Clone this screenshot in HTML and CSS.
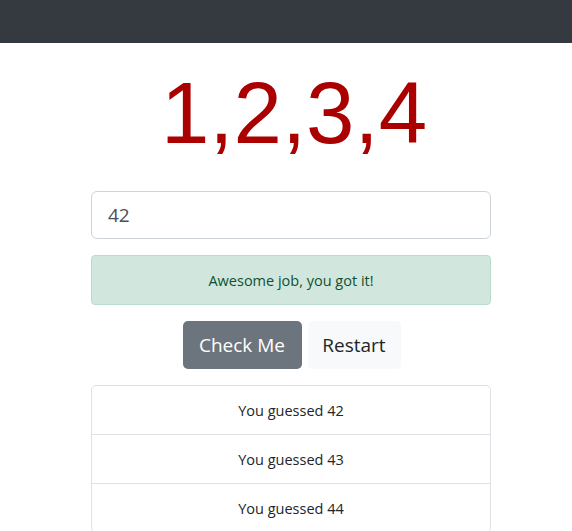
FILE: index.html
```html
<!DOCTYPE html>
<html>
<head>
<meta charset="utf-8">
<link rel="stylesheet" href="styles.css">
</head>
<body>
<nav class="navbar"></nav>
<main class="game">
  <h1 class="target">1,2,3,4</h1>
  <input class="guess" type="text" value="42">
  <div class="alert">Awesome job, you got it!</div>
  <div class="actions">
    <button class="btn btn-check">Check Me</button>
    <button class="btn btn-restart">Restart</button>
  </div>
  <ul class="history">
    <li>You guessed 42</li>
    <li>You guessed 43</li>
    <li>You guessed 44</li>
  </ul>
</main>
</body>
</html>
```
FILE: styles.css
```css
html, body {
  margin: 0;
  padding: 0;
  background: #fff;
  font-family: "Open Sans", "Noto Sans", sans-serif;
  color: #212529;
  overflow: hidden;
}
.navbar {
  height: 43px;
  background: #343a40;
}
.game {
  width: 400px;
  margin-left: 91px;
  display: flex;
  flex-direction: column;
}
.target {
  margin: 20px 0 0 0;
  height: 128px;
  text-align: center;
  font-family: "Liberation Sans", Arial, sans-serif;
  font-weight: normal;
  font-size: 87px;
  line-height: 100px;
  color: #aa0000;
  padding-left: 6px;
}
.guess {
  box-sizing: border-box;
  width: 400px;
  height: 48px;
  border: 1px solid #ced4da;
  border-radius: 6px;
  padding: 0 16px;
  font-family: inherit;
  font-size: 19px;
  color: #495057;
  outline: none;
}
.alert {
  box-sizing: border-box;
  margin-top: 16px;
  height: 50px;
  background: #d1e7dd;
  border: 1px solid #badbcc;
  border-radius: 4px;
  color: #0f5132;
  font-size: 14.5px;
  display: flex;
  align-items: center;
  justify-content: center;
}
.actions {
  margin-top: 16px;
  display: flex;
  justify-content: center;
  gap: 6px;
  padding-left: 1px;
}
.btn {
  height: 48px;
  border: 1px solid transparent;
  border-radius: 5px;
  font-family: inherit;
  font-size: 19px;
  padding: 0;
  white-space: nowrap;
}
.btn-check {
  width: 119px;
  background: #6c757d;
  color: #fff;
}
.btn-restart {
  width: 93px;
  background: #f8f9fa;
  color: #212529;
}
.history {
  list-style: none;
  margin: 16px 0 0 0;
  padding: 0;
  border: 1px solid #dee2e6;
  border-radius: 5px;
}
.history li {
  height: 48px;
  display: flex;
  align-items: center;
  justify-content: center;
  font-size: 14.5px;
  border-top: 1px solid #dee2e6;
}
.history li:first-child {
  border-top: none;
}
```
